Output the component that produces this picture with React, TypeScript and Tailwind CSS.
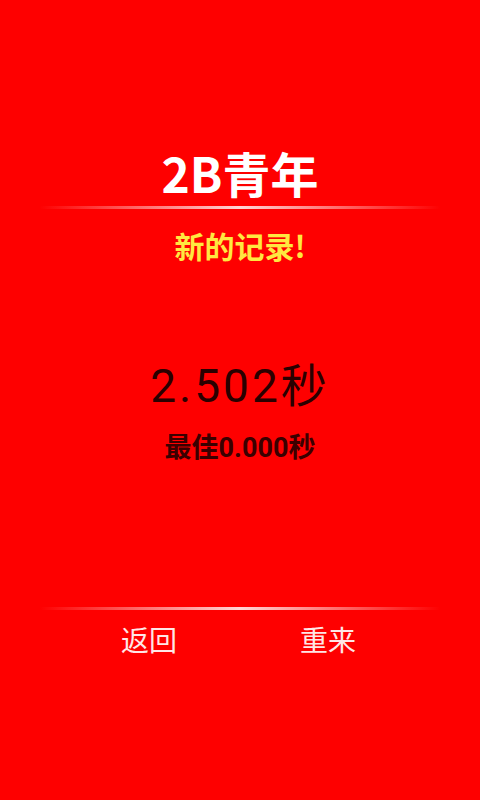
export default function App() {
  const font = { fontFamily: '"Noto Sans CJK SC", "Noto Sans", sans-serif' };
  const num = { fontFamily: 'Roboto, "Noto Sans CJK SC", sans-serif' };
  return (
    <div className="w-[480px] h-[800px] bg-[#fe0000] flex flex-col items-center" style={font}>
      <div className="h-[144px]" />
      <h1 className="text-[48px] leading-[56px] font-bold text-white">2B青年</h1>
      <div className="mt-[6px] w-[400px] h-[3px] bg-gradient-to-r from-transparent via-[#ffd6d6] to-transparent" />
      <p className="mt-[18px] text-[30px] leading-[36px] font-bold text-[#ffe840]">新的记录!</p>
      <div className="h-[95px]" />
      <p className="text-[46px] leading-[56px] tracking-[3px] text-[#2a0000]" style={num}>2.502秒</p>
      <p className="mt-[17px] text-[27px] leading-[34px] font-bold text-[#3a0000]" style={num}>最佳0.000秒</p>
      <div className="h-[142px]" />
      <div className="w-[400px] h-[3px] bg-gradient-to-r from-transparent via-[#ffd6d6] to-transparent" />
      <div className="mt-[11px] w-full flex">
        <div className="w-[298px] flex justify-center">
          <span className="text-[28px] leading-[36px] text-[#ffe6e6]">返回</span>
        </div>
        <div className="w-[60px] flex justify-center">
          <span className="text-[28px] leading-[36px] text-[#ffe6e6] whitespace-nowrap">重来</span>
        </div>
      </div>
    </div>
  );
}
